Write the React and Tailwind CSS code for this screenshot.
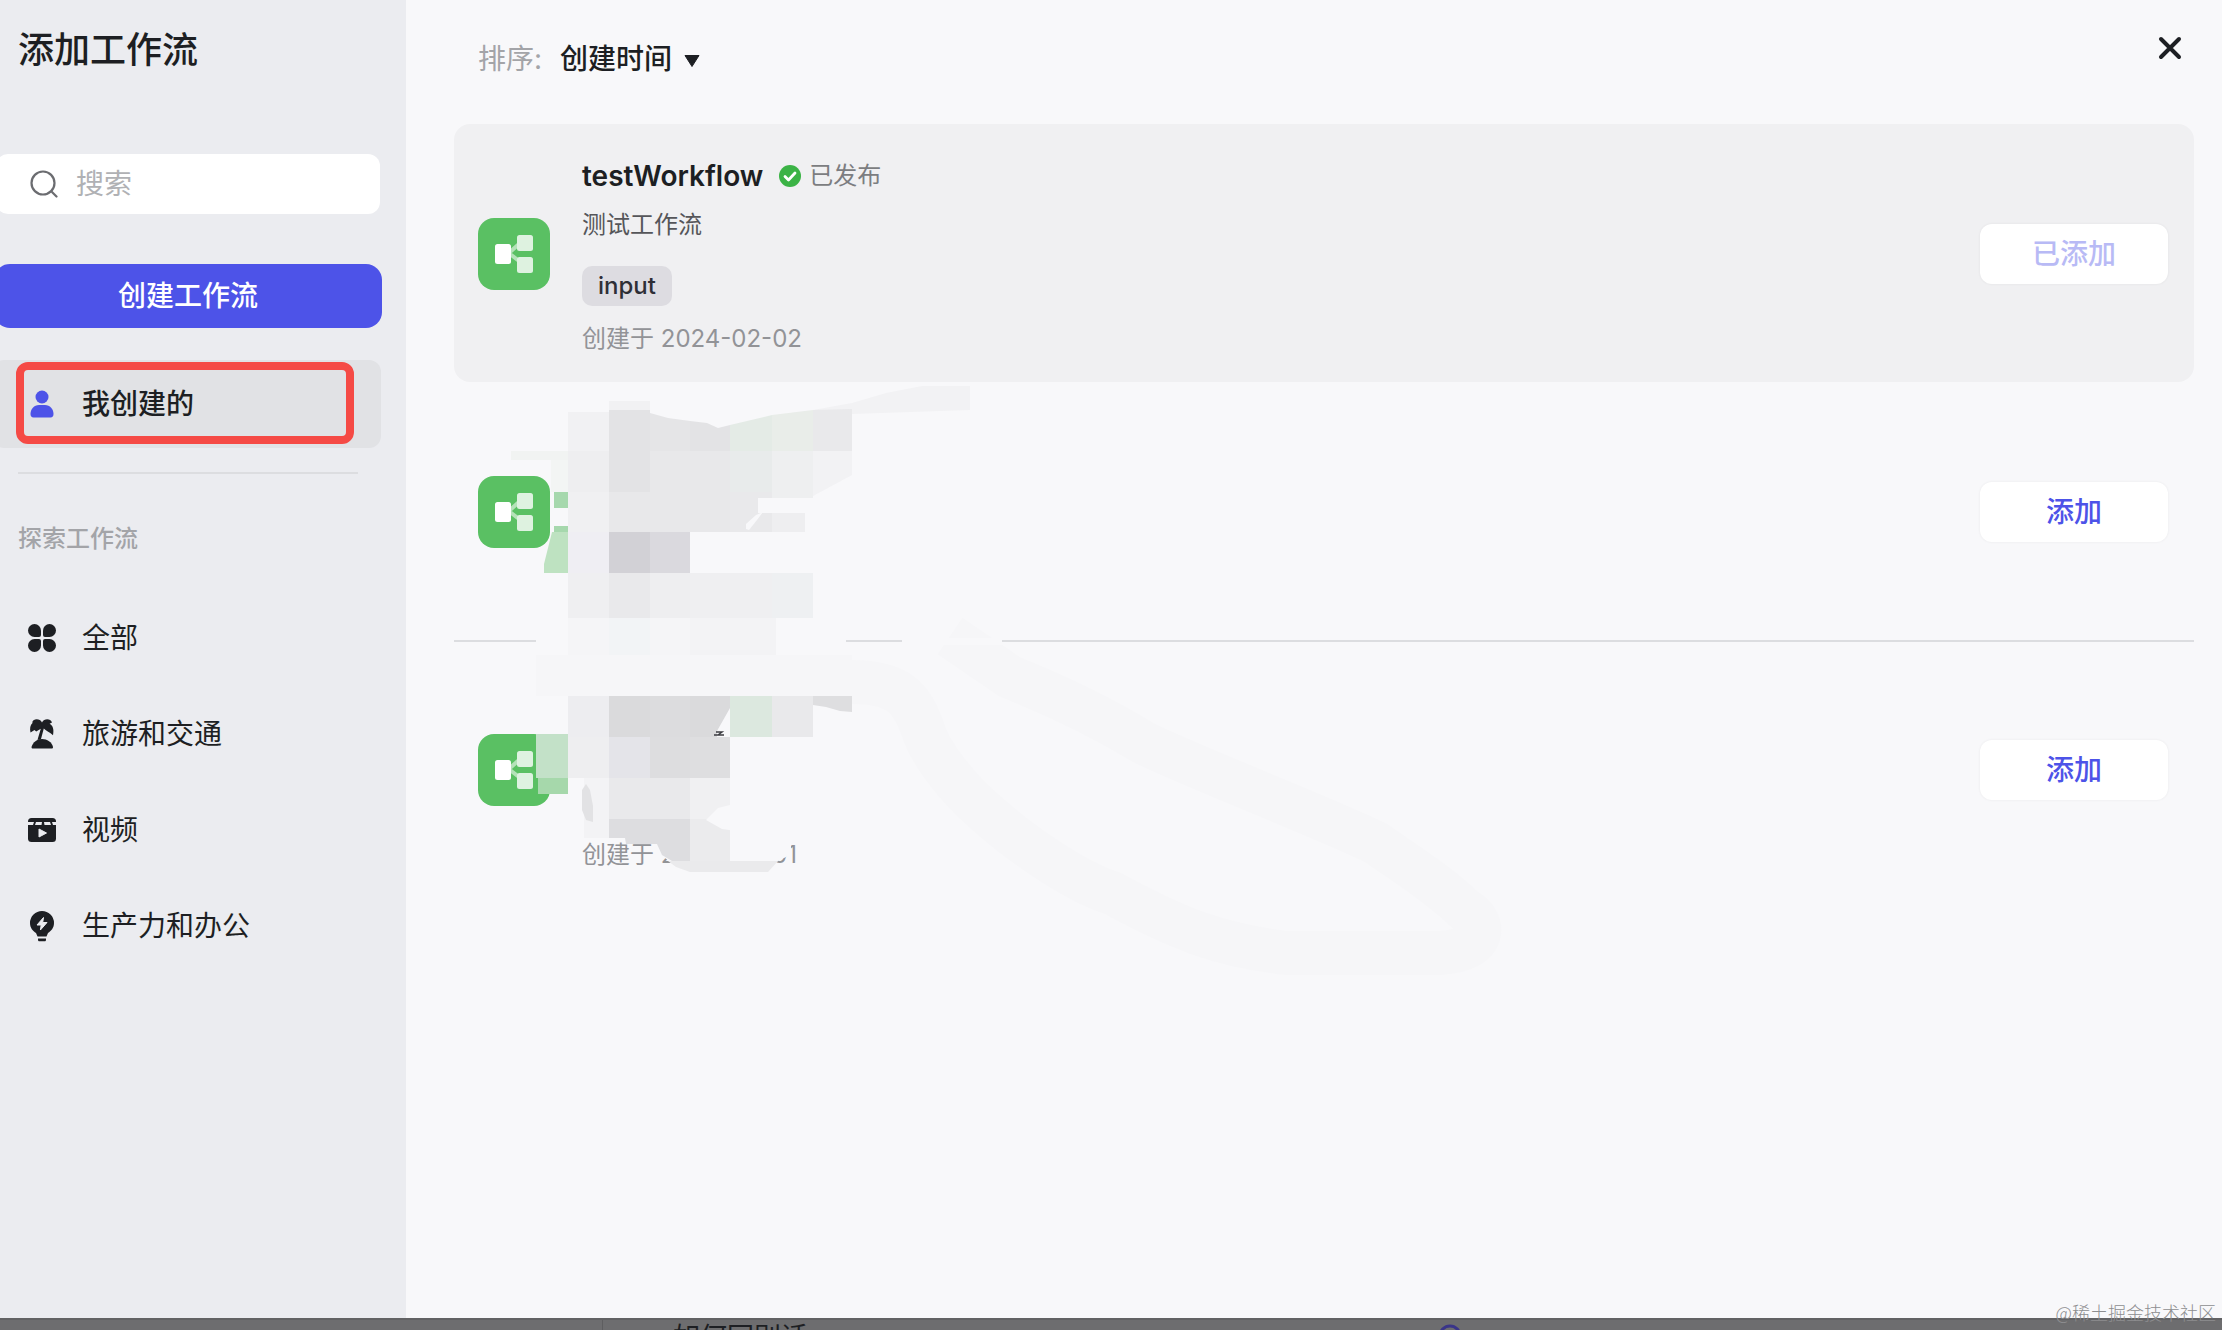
import React, { useState } from "react";

const categories = [
  { id: "all", label: "全部", icon: CloverIcon },
  { id: "travel", label: "旅游和交通", icon: PalmIcon },
  { id: "video", label: "视频", icon: VideoIcon },
  { id: "office", label: "生产力和办公", icon: BulbIcon },
];

// [x, y, width, height, fill]
const tiles = [
  [511, 451, 57, 9, "#f1f3f2"],
  [551, 460, 17, 32, "#f3f5f4"],
  [554, 492, 14, 16, "#a6d8ad"],
  [554, 526, 14, 6, "#a6d8ad"],
  [568, 412, 41, 39, "#f1f1f3"],
  [568, 451, 41, 41, "#eeeef0"],
  [568, 492, 41, 40, "#f0f0f2"],
  [568, 532, 41, 41, "#efeef3"],
  [568, 573, 41, 45, "#efeff1"],
  [568, 618, 41, 37, "#f5f5f7"],
  [609, 401, 41, 9, "#f1f1f3"],
  [609, 410, 41, 82, "#e3e3e5"],
  [609, 492, 41, 40, "#e8e8ea"],
  [609, 532, 41, 41, "#d2d1d6"],
  [609, 573, 41, 45, "#e9e9eb"],
  [609, 618, 41, 37, "#f2f4f6"],
  [650, 451, 80, 81, "#e8e8ea"],
  [650, 532, 40, 41, "#dad9de"],
  [650, 573, 40, 45, "#eeeef0"],
  [650, 618, 40, 37, "#f5f5f7"],
  [690, 573, 82, 45, "#efeff1"],
  [690, 618, 86, 37, "#f3f3f5"],
  [730, 451, 42, 41, "#e8ebeb"],
  [772, 451, 41, 47, "#eeeff0"],
  [758, 513, 14, 19, "#e9e9eb"],
  [772, 513, 33, 19, "#eeeef0"],
  [772, 573, 41, 45, "#eef0f2"],
  [568, 696, 41, 41, "#ededf0"],
  [568, 737, 41, 41, "#eeeef0"],
  [584, 778, 25, 60, "#f3f3f5"],
  [609, 696, 41, 41, "#dadadc"],
  [609, 737, 41, 41, "#e4e4e9"],
  [609, 778, 81, 41, "#e9e9eb"],
  [650, 696, 40, 41, "#dcdcde"],
  [650, 737, 40, 41, "#dddddf"],
  [690, 737, 40, 41, "#dedee0"],
  [690, 778, 40, 41, "#f0f0f2"],
  [690, 819, 40, 42, "#ebebed"],
  [730, 696, 42, 41, "#dce8df"],
  [772, 696, 41, 41, "#e9e9eb"],
  [536, 734, 32, 44, "#c3e1c8"],
  [538, 778, 30, 16, "#a6d8ab"],
];

const shards = [
  ["813,410 852,403 886,393 922,386 970,386 970,410 852,414", "#f2f2f4"],
  ["650,413 668,418 690,421 690,451 650,451", "#e5e5e7"],
  ["690,421 707,423 718,428 730,425 730,451 690,451", "#e3e3e5"],
  ["730,425 772,415 772,451 730,451", "#e4ebe6"],
  ["772,415 813,410 813,451 772,451", "#e9ede9"],
  ["813,410 852,409 852,451 813,451", "#e9e9eb"],
  ["813,451 852,451 852,475 813,496", "#f2f2f4"],
  ["730,492 772,492 772,498 758,498 758,532 730,532", "#e9e9eb"],
  ["552,532 568,532 568,573 544,573 544,564", "#bee2c1"],
  ["690,696 730,696 730,708 717,731 717,737 690,737", "#dadadc"],
  ["813,696 852,696 852,712 840,711 826,707 813,705", "#dedee0"],
  ["582,790 586,784 590,790 593,806 593,822 586,820 582,810", "#e2e2e4"],
  ["609,819 690,819 690,861 672,861 662,855 657,844 626,844 625,838 609,838", "#dddde0"],
  ["668,861 778,861 768,872 690,872 676,867", "#eaeaec"],
  ["706,820 718,808 734,804 736,831 722,829", "#f8f8fa"],
  ["763,512 757,520 749,530 746,529 746,524 756,515", "#f8f8fa"],
];

function CloverIcon() {
  return (
    <svg viewBox="0 0 28 28" className="h-7 w-7" fill="currentColor">
      <path d="M6.500 0A6.500 6.500 0 0 1 13 6.500V11a2 2 0 0 1-2 2H6.500A6.500 6.500 0 0 1 6.500 0Z" />
      <path d="M21.500 0A6.500 6.500 0 0 1 21.500 13H17a2 2 0 0 1-2-2V6.500A6.500 6.500 0 0 1 21.500 0Z" />
      <path d="M6.500 28A6.500 6.500 0 0 1 6.500 15H11a2 2 0 0 1 2 2v4.500A6.500 6.500 0 0 1 6.500 28Z" />
      <path d="M21.500 28A6.500 6.500 0 0 1 15 21.500V17a2 2 0 0 1 2-2h4.500A6.500 6.500 0 0 1 21.500 28Z" />
    </svg>
  );
}

function PalmIcon() {
  return (
    <svg viewBox="0 0 28 32" className="h-8 w-7" fill="currentColor">
      <path d="M14 4.500C12.500 1 8 .3 5.500 2.200 4.500 3 4.200 4 4.500 5 2.200 7 1.600 10.500 2.500 14.500L6.500 12l1.700 1.500 4.600-2.700-3.300 11h3.300l3-11.300c2 2 5.500 3.500 9.200 6.700 1.200-6-.1-9.500-3.400-11.400L24 4.500C22.500 .2 16 .3 14 4.500Z" />
      <path d="M3.500 29c1.500-5 5.500-8 10.500-8s10 3 11 8c0 1.200-.5 1.500-1.500 1.500H5c-1 0-1.500-.3-1.500-1.500Z" />
    </svg>
  );
}

function VideoIcon() {
  return (
    <svg viewBox="0 0 28 24" className="h-6 w-7">
      <rect width="28" height="24" rx="3.500" fill="currentColor" />
      <path d="M0 4h6l-1 3H0ZM8 4h6l-.5 3H7ZM16 4h6l1 3h-6.500ZM24 4h4v3h-3Z" fill="#ebecf0" />
      <path d="M11 11v8l7.500-4Z" fill="#ebecf0" stroke="#ebecf0" strokeLinejoin="round" />
    </svg>
  );
}

function BulbIcon() {
  return (
    <svg viewBox="0 0 28 32" className="h-8 w-7" fill="currentColor">
      <path d="M14 1a12 12 0 0 1 12 12c0 5-3 8-6 10l-1.500 3.500h-9L8 23c-3-2-6-5-6-10A12 12 0 0 1 14 1Z" />
      <path d="M10 28.500h8v1.200c0 1-.6 1.500-1.500 1.500h-5c-.9 0-1.500-.5-1.500-1.500Z" />
      <path d="M15.500 7.500 9 15h4.200l-.8 5L19 12.500h-4.300Z" fill="#ebecf0" stroke="#ebecf0" strokeLinejoin="round" />
    </svg>
  );
}

function UserIcon() {
  return (
    <svg viewBox="0 0 24 28" className="h-7 w-6" fill="#4d53e8">
      <circle cx="12" cy="7" r="6.500" />
      <path d="M9 15h6c5 0 8.500 4 8.500 9 0 2.200-1 3.500-3 3.500h-17c-2 0-3-1.300-3-3.500 0-5 3.500-9 8.500-9Z" />
    </svg>
  );
}

function WorkflowLogo() {
  return (
    <svg viewBox="0 0 72 72" className="h-[72px] w-[72px] shrink-0">
      <rect width="72" height="72" rx="16" fill="#5ac063" />
      <path d="M32 34 41 26M32 36l9 7" stroke="#b5e2b9" strokeWidth="4" />
      <rect x="39" y="17" width="16" height="16" rx="2.500" fill="#def2e0" />
      <rect x="39" y="39" width="16" height="16" rx="2.500" fill="#def2e0" />
      <rect x="17" y="26" width="16" height="20" rx="2.500" fill="#fff" />
    </svg>
  );
}

function NavItem({ label, icon: Icon, active, onClick }) {
  return (
    <button
      onClick={onClick}
      className={`-ml-2 flex h-[88px] w-[389px] items-center gap-[26px] rounded-xl pl-9 text-left text-[28px] leading-10 ${
        active ? "bg-[#e1e2e5] font-medium" : ""
      }`}
    >
      <span className="flex w-7 justify-center"><Icon /></span>
      {label}
    </button>
  );
}

function AddButton({ added }) {
  return (
    <button
      disabled={added}
      className={`h-[60px] w-[188px] shrink-0 rounded-xl bg-white text-[28px] font-medium shadow-[0_0_2px_1px_rgba(0,0,0,0.03)] ${
        added ? "text-[#b8baf5]" : "text-[#4d53e8]"
      }`}
    >
      {added ? "已添加" : "添加"}
    </button>
  );
}

function Row({ added, className, children }) {
  return (
    <article className={`flex min-h-[258px] items-center gap-8 pl-6 pr-[26px] ${className}`}>
      <WorkflowLogo />
      <div className="flex flex-1 flex-col items-start self-stretch pb-[26px]">{children}</div>
      <AddButton added={added} />
    </article>
  );
}

function Redaction() {
  return (
    <svg viewBox="454 382 760 620" className="pointer-events-none absolute left-0 top-0 h-[620px] w-[760px] overflow-visible" aria-hidden="true">
      <path
        d="M852 682C900 682 912 700 922 727C930 755 960 790 983 810C1010 835 1070 880 1112 893C1180 930 1220 945 1286 953H1440C1490 950 1485 920 1465 910C1440 885 1400 860 1376 843C1330 820 1200 770 1144 743C1090 710 1030 685 1010 677L950 636"
        fill="none" stroke="#f6f6f8" strokeWidth="44" strokeLinejoin="round"
      />
      <path d="M536 610H846V650H536ZM902 638H1002V645H902Z" fill="#f8f8fa" />
      <rect x="536" y="655" width="316" height="41" fill="#f6f6f8" />
      <path d="M661 840H791V850L786 857 776 862 730 870 680 870 669 861 661 855Z" fill="#f8f8fa" />
      {tiles.map(([x, y, w, h, fill]) => (
        <rect key={`${x}-${y}`} x={x} y={y} width={w} height={h} fill={fill} shapeRendering="crispEdges" />
      ))}
      {shards.map(([points, fill]) => (
        <polygon key={points} points={points} fill={fill} />
      ))}
      <path d="M714 735H724M716 732H722L718 735" fill="none" stroke="#3c3d42" strokeWidth="1.500" />
    </svg>
  );
}

export default function App() {
  const [tab, setTab] = useState("mine");
  const [query, setQuery] = useState("");

  return (
    <div className="relative flex h-screen flex-col overflow-hidden bg-[#6d6d6f] font-['Inter','Noto_Sans_CJK_SC',sans-serif] text-[#1d1f23]">
      <div className="flex min-h-0 flex-1">
        <aside className="w-[406px] shrink-0 overflow-hidden bg-[#ebecf0]">
          <h1 className="ml-[18px] pt-[26px] text-4xl font-medium leading-[48px]">添加工作流</h1>

          <div className="-ml-1 mt-20 flex h-[60px] w-96 items-center gap-[18px] rounded-xl bg-white pl-[34px]">
            <svg viewBox="0 0 28 28" className="h-7 w-7 shrink-0" fill="none" stroke="#6b6c70" strokeWidth="2.200" strokeLinecap="round">
              <circle cx="13" cy="13" r="11.500" />
              <path d="m21.500 21.500 5 5" />
            </svg>
            <input
              aria-label="搜索"
              className="w-64 bg-transparent text-[28px] outline-none placeholder:text-[#b0b1b4]"
              placeholder="搜索"
              value={query}
              onChange={(e) => setQuery(e.target.value)}
            />
          </div>

          <button className="-ml-1.5 mt-[50px] block h-16 w-[388px] rounded-2xl bg-[#4d53e8] text-[28px] font-medium text-white">
            创建工作流
          </button>

          <nav className="mt-8">
            <div className="relative">
              <NavItem label="我创建的" icon={UserIcon} active={tab === "mine"} onClick={() => setTab("mine")} />
              <div className="pointer-events-none absolute left-4 top-0.5 h-[82px] w-[338px] rounded-xl border-8 border-[#f54a45]" />
            </div>
            <hr className="ml-[18px] mt-6 w-[340px] border-t-2 border-[#dcdde0]" />
            <h2 className="ml-[18px] mt-12 text-2xl font-medium leading-[34px] text-[#a3a4a8]">探索工作流</h2>
            <div className="mt-[38px] flex flex-col gap-2">
              {categories.map((c) => (
                <NavItem key={c.id} label={c.label} icon={c.icon} active={tab === c.id} onClick={() => setTab(c.id)} />
              ))}
            </div>
          </nav>
        </aside>

        <main className="min-w-0 flex-1 overflow-hidden bg-[#f8f8fa] pl-12 pr-7">
          <header className="flex h-[124px] items-start justify-between pl-6 pr-3">
            <div className="mt-[39px] flex items-center text-[28px] leading-10">
              <label htmlFor="sort" className="mr-[18px] text-[#a3a4a8]">排序:</label>
              <div className="relative">
                <select id="sort" className="h-10 w-[148px] appearance-none bg-transparent font-medium leading-10 outline-none">
                  <option>创建时间</option>
                </select>
                <svg viewBox="0 0 16 12" className="pointer-events-none absolute right-2 top-4 h-3 w-4">
                  <path d="M1 .5h14L8 11.500Z" fill="#1d1f23" stroke="#1d1f23" strokeLinejoin="round" />
                </svg>
              </div>
            </div>
            <button aria-label="关闭" className="mt-9 h-6 w-6">
              <svg viewBox="0 0 24 24" className="h-6 w-6" stroke="#1d1f23" strokeWidth="4" strokeLinecap="round">
                <path d="m3 3 18 18M21 3 3 21" />
              </svg>
            </button>
          </header>

          <Row added className="rounded-2xl bg-[#f0f0f2] pt-0.5">
            <div className="mt-[30px] flex items-center leading-10">
              <h3 className="text-[28px] font-semibold">testWorkflow</h3>
              <svg viewBox="0 0 22 22" className="ml-4 h-[22px] w-[22px]">
                <circle cx="11" cy="11" r="11" fill="#3bb346" />
                <path d="m6 11.500 3.500 3.500L16 8" fill="none" stroke="#fff" strokeWidth="2.800" strokeLinecap="round" strokeLinejoin="round" />
              </svg>
              <span className="ml-2 text-2xl text-[#7c7d81]">已发布</span>
            </div>
            <p className="mt-3 text-2xl leading-[34px] text-[#55565a]">测试工作流</p>
            <span className="mt-6 h-10 rounded-[10px] bg-[#dddce1] px-4 text-2xl font-medium leading-10 text-[#2e2f36]">input</span>
            <p className="mt-4 text-2xl leading-[34px] text-[#929397]">创建于 2024-02-02</p>
          </Row>

          <div className="relative">
            <Row className="pt-0.5" />
            <Row className="border-t-2 border-[#dcdde0]">
              <p className="mt-auto text-2xl leading-[34px] text-[#929397]">创建于 2024-02-01</p>
            </Row>
            <Redaction />
          </div>
        </main>
      </div>

      {/* dimmed page behind the dialog */}
      <div className="flex h-3 shrink-0 overflow-hidden border-t-2 border-[#626264]">
        <div className="w-[603px] shrink-0 border-r border-[#5e5e60]" />
        <div className="ml-[70px] text-[27px] leading-[36px] text-[#1d1f23]">如何回别话</div>
        <svg viewBox="0 0 24 24" className="ml-[630px] mt-1 h-6 w-6 shrink-0" fill="none" stroke="#3a3589" strokeWidth="3">
          <circle cx="12" cy="12" r="10" />
        </svg>
      </div>
      <div className="pointer-events-none absolute bottom-1.5 right-1.5 font-['Noto_Sans_CJK_SC',sans-serif] text-lg font-light leading-6 text-[#8d8e90]">
        @稀土掘金技术社区
      </div>
    </div>
  );
}
